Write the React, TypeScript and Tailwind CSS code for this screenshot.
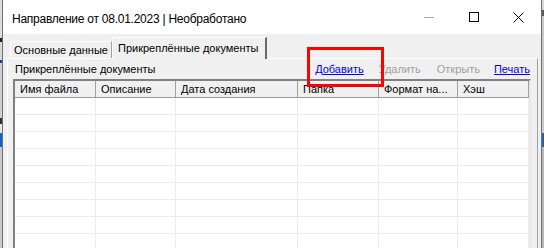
const columns = [
  { title: 'Имя файла', w: 'w-[81px]' },
  { title: 'Описание', w: 'w-[80px]' },
  { title: 'Дата создания', w: 'w-[122px]' },
  { title: 'Папка', w: 'w-[81px]' },
  { title: 'Формат на...', w: 'w-[79px]' },
  { title: 'Хэш', w: 'flex-1' },
]

const rows = Array.from({ length: 9 })

function CaptionButtons() {
  return (
    <div className="flex items-center h-full pr-[17px]">
      <svg width="10" height="10" viewBox="0 0 10 10" className="mt-[1px]">
        <line x1="0" y1="4.5" x2="10" y2="4.5" stroke="#a8a8a8" strokeWidth="1" />
      </svg>
      <svg width="10" height="10" viewBox="0 0 10 10" className="ml-[35px]">
        <rect x="0.5" y="0.5" width="9" height="9" fill="none" stroke="#000" strokeWidth="1" />
      </svg>
      <svg width="11" height="11" viewBox="0 0 11 11" className="ml-[34px]">
        <path d="M0.5 0.5 L10.5 10.5 M10.5 0.5 L0.5 10.5" stroke="#000" strokeWidth="1" />
      </svg>
    </div>
  )
}

export default function App() {
  return (
    <div className="relative w-[544px] h-[248px] flex overflow-hidden bg-[#d4d4d4] font-['Liberation_Sans',Arial,sans-serif] text-[11px] text-black">
      {/* background app peeking out on the left */}
      <div className="w-[2px] flex flex-col">
        <div className="h-[38px] bg-[#dcdcdc]" />
        <div className="h-[4px] bg-[#202020]" />
        <div className="h-[18px] bg-[#d8d8d8]" />
        <div className="h-[3px] bg-[#1b3f8a]" />
        <div className="h-[55px] bg-[#d0d0d0]" />
        <div className="h-[6px] bg-[#303030]" />
        <div className="h-[9px] bg-[#e4e4e4]" />
        <div className="h-[14px] bg-[#1565c0]" />
        <div className="flex-1 bg-[#c8c8c8]" />
      </div>

      {/* dialog window */}
      <div className="w-[540px] h-full flex flex-col border-x border-[#707070] bg-[#f0f0f0]">
        <div className="h-[34px] shrink-0 bg-white flex items-center">
          <div className="flex-1 pl-[9px] pt-[3px] text-[12px] tracking-[-0.25px] leading-none">
            Направление от 08.01.2023 | Необработано
          </div>
          <CaptionButtons />
        </div>

        <div className="flex-1 flex flex-col min-h-0">
          {/* tab strip */}
          <div className="h-[24px] shrink-0 flex items-end pl-[7px]">
            <div className="w-[102px] h-[17px] border-t border-l border-white border-r border-r-[#a0a0a0] rounded-tl-[2px] pl-[3px] pt-[1px] leading-[14px] whitespace-nowrap">
              Основные данные
            </div>
            <div className="relative z-10 w-[155px] h-[22px] -mb-[1px] bg-[#f0f0f0] border-t border-l border-white border-r-2 border-r-[#696969] rounded-tl-[2px] pl-[5px] pt-[3px] leading-[14px] whitespace-nowrap">
              Прикреплённые документы
            </div>
          </div>

          {/* tab page */}
          <div className="flex-1 min-h-0 ml-[4px] mr-[3px] flex flex-col border-t border-l border-white border-r border-r-[#a0a0a0]">
            <div className="h-[20px] shrink-0 flex items-center pl-[7px] pr-[7px]">
              <span>Прикреплённые документы</span>
              <div className="ml-auto flex items-center">
                <span className="text-[#0000ff] underline">Добавить</span>
                <span className="ml-[15px] text-[#a0a0a0]">Удалить</span>
                <span className="ml-[16px] text-[#a0a0a0]">Открыть</span>
                <span className="ml-[14px] text-[#0000ff] underline">Печать</span>
              </div>
            </div>

            <div className="flex-1 min-h-0 ml-[5px] mr-[6px] bg-white border-t-2 border-l-2 border-t-[#808080] border-l-[#808080] border-r-2 border-r-[#e8e8e8] overflow-hidden">
              <div className="h-[17px] flex bg-[#f0f0f0] border-b border-[#9a9a9a]">
                {columns.map((c) => (
                  <div
                    key={c.title}
                    className={`${c.w} shrink-0 h-full border-r border-[#a0a0a0] pl-[5px] leading-[16px] whitespace-nowrap overflow-hidden`}
                  >
                    {c.title}
                  </div>
                ))}
              </div>
              {rows.map((_, i) => (
                <div key={i} className="h-[17px] flex border-b border-[#ececec]">
                  {columns.map((c) => (
                    <div key={c.title} className={`${c.w} shrink-0 h-full border-r border-[#ececec]`} />
                  ))}
                </div>
              ))}
            </div>
          </div>
        </div>
      </div>

      {/* background app peeking out on the right */}
      <div className="w-[2px] flex flex-col">
        <div className="h-[10px] bg-[#d8d8d8]" />
        <div className="h-[6px] bg-[#6a5a30]" />
        <div className="h-[117px] bg-[#c8c8c8]" />
        <div className="h-[14px] bg-[#1565c0]" />
        <div className="flex-1 bg-[#b8b8b8]" />
      </div>

      {/* annotation */}
      <div className="absolute left-[307px] top-[47px] w-[77px] h-[40px] border-[3px] border-[#ff0000]" />
    </div>
  )
}
